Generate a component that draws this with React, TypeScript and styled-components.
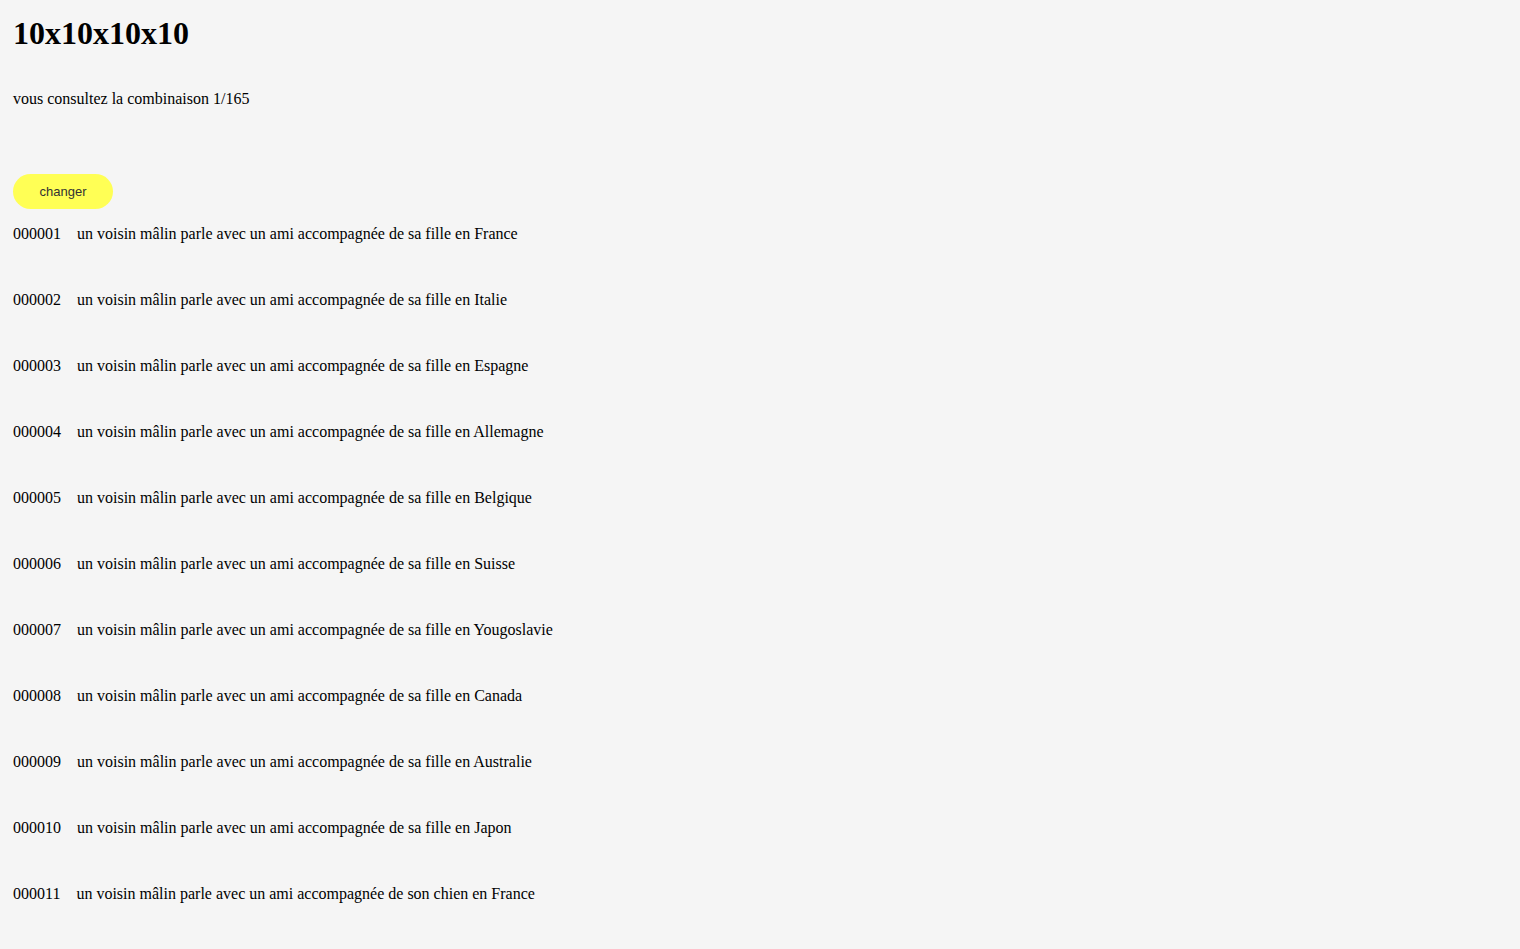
import React from "react";
import styled, { createGlobalStyle } from "styled-components";

const Global = createGlobalStyle`
  html, body {
    margin: 0;
    padding: 0;
    background: #f5f5f5;
  }
  body {
    font-family: "Liberation Serif", "Times New Roman", serif;
    font-size: 16px;
    color: #000;
  }
`;

const Page = styled.main`
  display: flex;
  flex-direction: column;
  align-items: flex-start;
  padding: 15px 13px;
`;

const Title = styled.h1`
  margin: 0;
  font-size: 32px;
  font-weight: bold;
  line-height: 37px;
`;

const Info = styled.p`
  margin: 38px 0 0;
  line-height: 18px;
`;

const ChangeButton = styled.button`
  margin-top: 66px;
  width: 100px;
  height: 35px;
  border: none;
  border-radius: 18px;
  background: #ffff55;
  color: #333;
  font-family: "Liberation Sans", Arial, sans-serif;
  font-size: 13px;
  cursor: pointer;
`;

const List = styled.div`
  display: flex;
  flex-direction: column;
  gap: 48px;
  margin-top: 16px;
`;

const Row = styled.div`
  display: flex;
  gap: 16px;
  line-height: 18px;
`;

const Num = styled.span``;

const countries = [
  "France",
  "Italie",
  "Espagne",
  "Allemagne",
  "Belgique",
  "Suisse",
  "Yougoslavie",
  "Canada",
  "Australie",
  "Japon",
];

const rows = [
  ...countries.map((c) => `un voisin mâlin parle avec un ami accompagnée de sa fille en ${c}`),
  "un voisin mâlin parle avec un ami accompagnée de son chien en France",
];

export default function App() {
  return (
    <>
      <Global />
      <Page>
        <Title>10x10x10x10</Title>
        <Info>vous consultez la combinaison 1/165</Info>
        <ChangeButton>changer</ChangeButton>
        <List>
          {rows.map((t, i) => (
            <Row key={i}>
              <Num>{String(i + 1).padStart(6, "0")}</Num>
              <span>{t}</span>
            </Row>
          ))}
        </List>
      </Page>
    </>
  );
}
